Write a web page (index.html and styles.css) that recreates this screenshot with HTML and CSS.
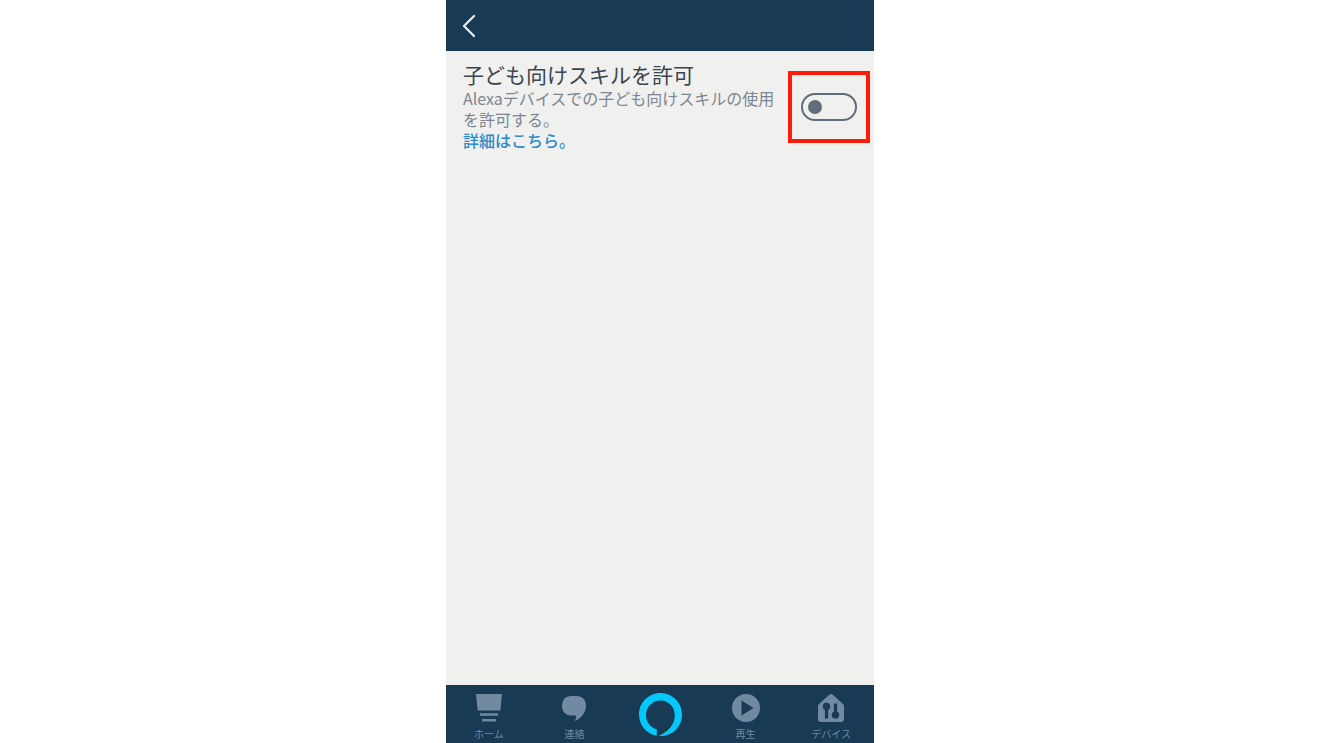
FILE: index.html
```html
<!DOCTYPE html>
<html lang="ja">
<head>
<meta charset="utf-8">
<meta name="viewport" content="width=device-width, initial-scale=1">
<title>子ども向けスキルを許可</title>
<link rel="stylesheet" href="styles.css">
</head>
<body>
<div class="app">
  <header class="topbar">
    <button class="back" type="button" aria-label="戻る">
      <svg width="14" height="24" viewBox="0 0 14 24" fill="none" stroke="currentColor" stroke-width="2.300" stroke-linecap="round" stroke-linejoin="round"><path d="M12 2 2 12 12 22"/></svg>
    </button>
  </header>
  <main class="content">
    <section class="setting">
      <div class="text">
        <h1 class="title"><label for="kids-skills">子ども向けスキルを許可</label></h1>
        <p class="description">Alexaデバイスでの子ども向けスキルの使用を許可する。</p>
        <a class="more" href="#">詳細はこちら。</a>
      </div>
      <div class="highlight">
        <input class="toggle" id="kids-skills" type="checkbox" role="switch">
      </div>
    </section>
  </main>
  <nav class="tabs">
    <a class="tab" href="#">
      <svg width="30" height="30" viewBox="0 0 30 30" fill="currentColor"><path d="M2 1h26l-1.6 16.5H3.6zM6 20.3h18v2.4H6zM8 26h14v2.4H8z"/></svg>
      <span>ホーム</span>
    </a>
    <a class="tab" href="#">
      <svg width="30" height="30" viewBox="0 0 30 30" fill="currentColor"><path d="M12 3h5.500c6 0 9.500 4 9.500 9.500C27 19 23 25 16 28c.8-2 1.100-3.500 1-5.500h-5C6.500 22.500 3 18.500 3 13c0-6 3.500-10 9-10z"/></svg>
      <span>連絡</span>
    </a>
    <a class="tab tab-alexa" href="#" aria-label="Alexa">
      <svg width="44" height="44" viewBox="0 0 44 44" fill="currentColor"><path fill-rule="evenodd" d="M22.500 0C10.600 0 1 9.600 1 21.500 1 32 8.500 41 18.800 42.800v-6.500C12.300 34.500 8 28.500 8 22 8 13.800 14.500 7.500 22.500 7.500S36.800 13.800 36.800 22c0 9.500-6.500 16.500-16.300 21C34 44 44 34 44 21.500 44 9.600 34.400 0 22.500 0z"/></svg>
    </a>
    <a class="tab" href="#">
      <svg width="30" height="30" viewBox="0 0 30 30" fill="currentColor"><path fill-rule="evenodd" d="M15 1a14 14 0 1 0 0 28 14 14 0 0 0 0-28zm-4.500 6.500L22.500 15l-12 7.500z"/></svg>
      <span>再生</span>
    </a>
    <a class="tab" href="#">
      <svg width="30" height="30" viewBox="0 0 30 30"><path d="M13.500 1.500a2.500 2.500 0 0 1 3 0L27 11a3 3 0 0 1 1 2.500V26a3 3 0 0 1-3 3H5a3 3 0 0 1-3-3V13.500A3 3 0 0 1 3 11z" fill="currentColor"/><g class="cutout"><circle cx="10.500" cy="13.500" r="3.700"/><path d="M8.900 13.500h3.200v12H8.900zM17.900 10.500h3.200v11h-3.200z"/><circle cx="19.500" cy="22" r="3.700"/></g></svg>
      <span>デバイス</span>
    </a>
  </nav>
</div>
</body>
</html>
```
FILE: styles.css
```css
* {
  box-sizing: border-box;
}

body {
  margin: 0;
  background: #fff;
  font-family: "Noto Sans CJK JP", sans-serif;
}

.app {
  display: flex;
  flex-direction: column;
  width: 100%;
  max-width: 428px;
  min-height: 100vh;
  margin: 0 auto;
  background: #f0f0ee;
}

.topbar {
  display: flex;
  align-items: center;
  height: 51px;
  padding: 0 16px;
  background: #183a54;
}

.back {
  display: flex;
  padding: 0;
  border: 0;
  background: none;
  color: #e8edf1;
  cursor: pointer;
}

.content {
  flex: 1;
}

.setting {
  display: flex;
  justify-content: space-between;
  align-items: flex-start;
  padding: 10px 4px 10px 17px;
}

.text {
  flex: 1;
}

.title {
  margin: 0;
  color: #3c4650;
  font-size: 21px;
  font-weight: 400;
  line-height: 27px;
}

.description {
  max-width: 320px;
  margin: 0;
  color: #7b8691;
  font-size: 16px;
  line-height: 21px;
}

.more {
  display: block;
  color: #2c8bca;
  font-size: 16px;
  font-weight: 500;
  line-height: 21px;
  text-decoration: none;
}

.highlight {
  display: flex;
  align-items: center;
  justify-content: center;
  flex: none;
  width: 82px;
  height: 72px;
  margin-top: 10px;
  border: 4px solid #ff1a0a;
}

.toggle {
  display: flex;
  align-items: center;
  width: 56px;
  height: 28px;
  margin: 0;
  padding: 0 5px;
  border: 2px solid #606d7b;
  border-radius: 14px;
  appearance: none;
  cursor: pointer;
}

.toggle::before {
  content: "";
  width: 14px;
  height: 14px;
  border-radius: 50%;
  background: #606d7b;
}

.toggle:checked {
  justify-content: flex-end;
}

.tabs {
  display: grid;
  grid-template-columns: repeat(5, 1fr);
  height: 58px;
  background: #183a54;
}

.tab {
  display: flex;
  flex-direction: column;
  align-items: center;
  gap: 4px;
  padding-top: 8px;
  color: #7189a1;
  font-size: 10px;
  line-height: 14px;
  text-decoration: none;
}

.tab-alexa {
  color: #05c8fa;
}

.cutout {
  fill: #183a54;
}
```
